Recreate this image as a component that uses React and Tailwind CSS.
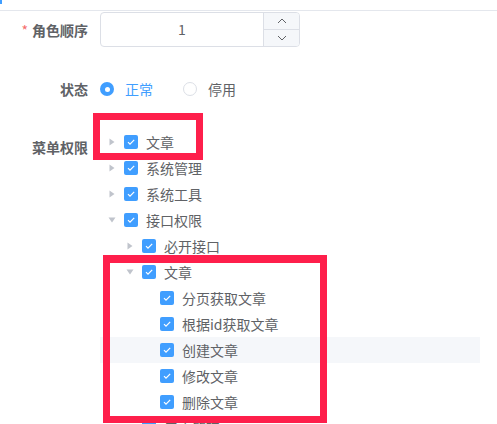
import React from "react";

const font = { fontFamily: '"Noto Sans CJK SC", "Noto Sans", sans-serif' };

const tree = [
  { label: "文章", level: 0, caret: "right" },
  { label: "系统管理", level: 0, caret: "right" },
  { label: "系统工具", level: 0, caret: "right" },
  { label: "接口权限", level: 0, caret: "down" },
  { label: "必开接口", level: 1, caret: "right" },
  { label: "文章", level: 1, caret: "down" },
  { label: "分页获取文章", level: 2 },
  { label: "根据id获取文章", level: 2 },
  { label: "创建文章", level: 2, hover: true },
  { label: "修改文章", level: 2 },
  { label: "删除文章", level: 2 },
  { label: "用户管理", level: 1, caret: "right" },
];

const indent = ["pl-0", "pl-[18px]", "pl-[36px]"];

function Caret({ dir }) {
  if (!dir) return <span className="w-6 shrink-0" />;
  return (
    <span className="w-6 h-full shrink-0 flex items-center justify-center">
      {dir === "right" ? (
        <svg width="6" height="8" viewBox="0 0 6 8">
          <path d="M0.5 0.5 L5.5 4 L0.5 7.5 Z" fill="#c0c4cc" />
        </svg>
      ) : (
        <svg width="8" height="6" viewBox="0 0 8 6">
          <path d="M0.5 0.5 L7.5 0.5 L4 5.5 Z" fill="#c0c4cc" />
        </svg>
      )}
    </span>
  );
}

function Checkbox() {
  return (
    <span className="w-[14px] h-[14px] rounded-[2px] bg-[#409eff] flex items-center justify-center shrink-0 mr-2">
      <svg width="14" height="14" viewBox="0 0 14 14">
        <path d="M4 7.2 L6 9.2 L10.2 4.8" fill="none" stroke="#fff" strokeWidth="1.2" />
      </svg>
    </span>
  );
}

export default function App() {
  return (
    <div className="relative w-[497px] h-[424px] overflow-hidden bg-white text-[14px] text-[#606266]" style={font}>
      {/* top bar */}
      <div className="h-[11px] border-b border-[#e4e7ed]">
        <div className="w-[2px] h-[4px] bg-[#409eff]" />
      </div>

      {/* 角色顺序 */}
      <div className="flex mt-[1px] h-[36px]">
        <label className="w-[100px] pr-3 flex items-center justify-end font-bold">
          <span className="text-[#f56c6c] mr-1 font-normal">*</span>角色顺序
        </label>
        <div className="w-[200px] h-[35px] border border-[#dcdfe6] rounded flex overflow-hidden">
          <div className="flex-1 flex items-center justify-center">1</div>
          <div className="w-[36px] border-l border-[#dcdfe6] bg-[#f5f7fa] flex flex-col">
            <div className="flex-1 border-b border-[#dcdfe6] flex items-center justify-center">
              <svg width="10" height="6" viewBox="0 0 10 6">
                <path d="M1 5 L5 1 L9 5" fill="none" stroke="#606266" strokeWidth="1" />
              </svg>
            </div>
            <div className="flex-1 flex items-center justify-center">
              <svg width="10" height="6" viewBox="0 0 10 6">
                <path d="M1 1 L5 5 L9 1" fill="none" stroke="#606266" strokeWidth="1" />
              </svg>
            </div>
          </div>
        </div>
      </div>

      {/* 状态 */}
      <div className="flex mt-[23px] h-[36px]">
        <label className="w-[100px] pr-3 flex items-center justify-end font-bold">状态</label>
        <div className="flex items-center">
          <span className="w-[14px] h-[14px] rounded-full bg-[#409eff] flex items-center justify-center">
            <span className="w-[5px] h-[5px] rounded-full bg-white" />
          </span>
          <span className="ml-[11px] text-[#409eff]">正常</span>
          <span className="ml-[30px] w-[14px] h-[14px] rounded-full border border-[#dcdfe6] bg-white" />
          <span className="ml-[11px]">停用</span>
        </div>
      </div>

      {/* 菜单权限 */}
      <div className="flex mt-[22px]">
        <label className="w-[100px] pr-3 h-[36px] flex items-center justify-end font-bold">菜单权限</label>
        <div className="w-[380px]">
          {tree.map((n, i) => (
            <div
              key={i}
              className={`h-[26px] flex items-center ${indent[n.level]} ${n.hover ? "bg-[#f5f7fa]" : ""}`}
            >
              <Caret dir={n.caret} />
              <Checkbox />
              <span>{n.label}</span>
            </div>
          ))}
        </div>
      </div>

      {/* annotation boxes */}
      <div className="absolute left-[93px] top-[113px] w-[110px] h-[47px] border-[7px] border-[#fe1f4b]" />
      <div className="absolute left-[103px] top-[255px] w-[224px] h-[168px] border-[7px] border-t-[8px] border-[#fe1f4b]" />
    </div>
  );
}
